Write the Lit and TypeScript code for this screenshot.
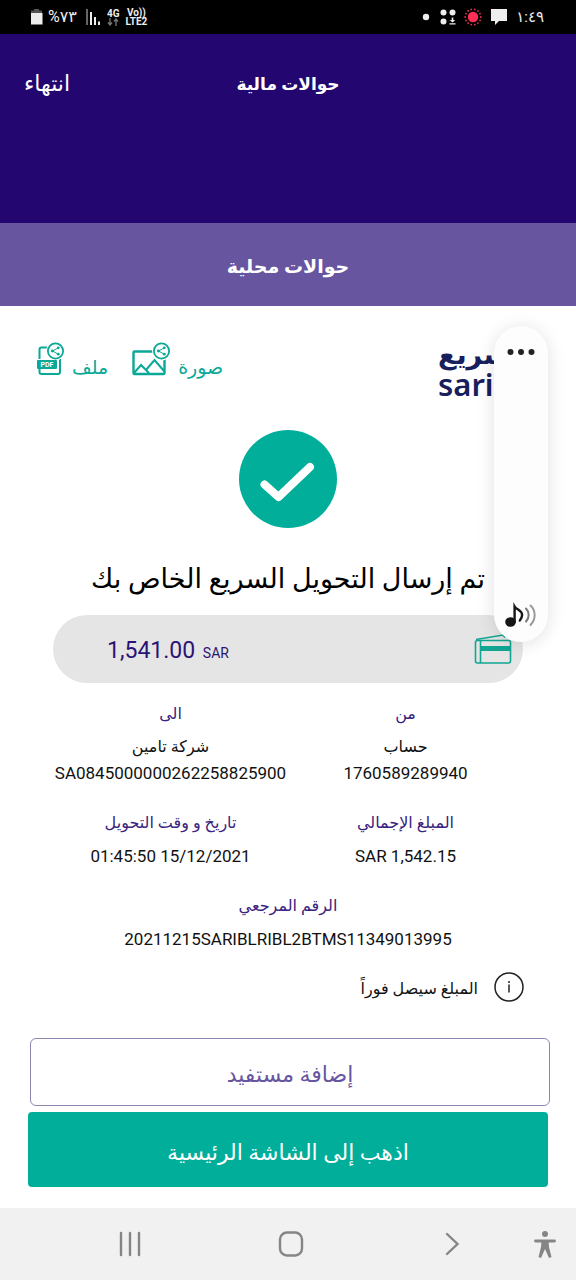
import { LitElement, html, css, svg } from "lit";
import { customElement } from "lit/decorators.js";

const shareBadge = (cx: number, cy: number) => svg`
  <circle cx=${cx} cy=${cy} r="7.6" fill="#fff" stroke="#0aa896" stroke-width="1.8"></circle>
  <path d="M${cx + 2.6} ${cy - 3}L${cx - 3} ${cy}L${cx + 2.6} ${cy + 3}" fill="none" stroke="#0aa896" stroke-width="1"></path>
  <circle cx=${cx + 2.8} cy=${cy - 3.2} r="1.4" fill="#0aa896"></circle>
  <circle cx=${cx - 3.2} cy=${cy} r="1.4" fill="#0aa896"></circle>
  <circle cx=${cx + 2.8} cy=${cy + 3.2} r="1.4" fill="#0aa896"></circle>`;

const rays = Array.from({ length: 14 }, (_, i) => {
  const a = (i * Math.PI * 2) / 14;
  return svg`<circle cx=${9 + Math.cos(a) * 7.8} cy=${9 + Math.sin(a) * 7.8} r="0.9" fill="#e8304e"></circle>`;
});

@customElement("status-bar")
class StatusBar extends LitElement {
  static styles = css`
    :host {
      display: flex;
      align-items: center;
      justify-content: space-between;
      box-sizing: border-box;
      height: 34px;
      padding: 0 32px 0 30px;
      background: #000;
      color: #eee;
      font-family: Roboto, "DejaVu Sans", sans-serif;
    }
    .group {
      display: flex;
      align-items: center;
    }
    .notices {
      gap: 8px;
    }
    .system {
      gap: 5px;
      direction: ltr;
    }
    .text {
      font-size: 16px;
      line-height: 20px;
    }
    .clock {
      font-size: 15px;
    }
    .stack {
      display: flex;
      flex-direction: column;
      align-items: center;
      font-size: 10px;
      line-height: 9px;
      font-weight: 700;
    }
    .network {
      margin: 0 1px 0 2px;
    }
    svg {
      display: block;
    }
  `;

  render() {
    return html`
      <div class="group notices">
        <span class="text clock">١:٤٩</span>
        <svg width="18" height="18" viewBox="0 0 18 18"><path d="M1 1h16v12H9l-4 4v-4H1z" fill="#eee"></path></svg>
        <svg width="18" height="18" viewBox="0 0 18 18"><circle cx="9" cy="9" r="5.2" fill="#ff2e55"></circle>${rays}</svg>
        <svg width="16" height="18" viewBox="0 0 16 18" fill="#eee">
          <circle cx="3.5" cy="4.5" r="3"></circle><circle cx="12.5" cy="4.5" r="3"></circle><circle cx="3.5" cy="13.5" r="3"></circle>
          <path d="M11.7 9.5h1.6v2.5h2l-2.8 2.400-2.800-2.400h2zM9.500 15.200h6v1.400h-6z"></path>
        </svg>
        <svg width="16" height="8" viewBox="0 0 16 8"><circle cx="10" cy="4" r="3.2" fill="#eee"></circle></svg>
      </div>
      <div class="group system">
        <svg width="13" height="18" viewBox="0 0 13 18"><path d="M4 1h5v1.500h3V6H1V2.500h3z" fill="#555"></path><path d="M1 5h11.500v11.500H1z" fill="#eee"></path></svg>
        <span class="text" dir="ltr">%٧٣</span>
        <svg width="18" height="18" viewBox="0 0 18 18"><path d="M5 1v16" stroke="#666" stroke-width="2"></path><path d="M9 4v13M13 9v8M17 13.500v3.500" stroke="#eee" stroke-width="2"></path></svg>
        <div class="stack network">
          <span>4G</span>
          <svg width="12" height="8" viewBox="0 0 12 8" fill="none" stroke="#777" stroke-width="1.3"><path d="M3 0v7M1 4.500l2 2.500 2-2.500M9 8V1M7 3.500L9 1l2 2.500"></path></svg>
        </div>
        <div class="stack"><span>Vo))</span><span>LTE2</span></div>
      </div>
    `;
  }
}

@customElement("nav-bar")
class NavBar extends LitElement {
  static styles = css`
    :host {
      display: flex;
      direction: ltr;
      align-items: center;
      height: 72px;
      background: #f1f1f1;
    }
    .main {
      flex: 1;
      display: flex;
      justify-content: space-between;
      padding: 0 61px 0 114px;
    }
    .access {
      margin-right: 15px;
    }
    button {
      border: 0;
      padding: 0;
      background: none;
    }
    svg {
      display: block;
      fill: none;
      stroke: #858585;
      stroke-width: 2.4;
      stroke-linecap: round;
    }
  `;

  render() {
    return html`
      <div class="main">
        <button aria-label="التطبيقات الأخيرة"><svg width="32" height="32" viewBox="0 0 32 32"><path d="M7 5v22M16 5v22M25 5v22"></path></svg></button>
        <button aria-label="الشاشة الرئيسية"><svg width="32" height="32" viewBox="0 0 32 32"><rect x="5" y="4.500" width="22" height="23" rx="7"></rect></svg></button>
        <button aria-label="رجوع"><svg width="32" height="32" viewBox="0 0 32 32"><path d="M11 6l10.500 10L11 26"></path></svg></button>
      </div>
      <button class="access" aria-label="إمكانية الوصول">
        <svg width="32" height="32" viewBox="0 0 32 32"><circle cx="16" cy="6" r="3" fill="#858585" stroke="none"></circle><path d="M6.500 13h19" stroke-width="2.800"></path><path d="M12.500 13h7l.5 6 2.500 10-2.500 1-4-9-4 9-2.500-1L12 19z" fill="#858585" stroke="none"></path></svg>
      </button>
    `;
  }
}

@customElement("volume-panel")
class VolumePanel extends LitElement {
  static styles = css`
    :host {
      display: flex;
      flex-direction: column;
      align-items: center;
      justify-content: space-between;
      box-sizing: border-box;
      width: 54px;
      height: 316px;
      padding: 22px 0 10px;
      border-radius: 27px;
      background: #fdfdfd;
      box-shadow: 0 2px 18px rgba(0, 0, 0, 0.12);
    }
    button {
      border: 0;
      padding: 0;
      background: none;
    }
    svg {
      display: block;
    }
  `;

  render() {
    return html`
      <button aria-label="خيارات الصوت">
        <svg width="30" height="8" viewBox="0 0 30 8" fill="#222"><circle cx="4.500" cy="4" r="3"></circle><circle cx="15" cy="4" r="3"></circle><circle cx="25.500" cy="4" r="3"></circle></svg>
      </button>
      <button aria-label="صوت الوسائط">
        <svg width="36" height="32" viewBox="0 0 36 32" fill="none" stroke-linecap="round">
          <ellipse cx="7.500" cy="22" rx="5.300" ry="4.800" fill="#161616"></ellipse>
          <path d="M11.600 22V6.500c2 3.500 7.500 3.500 7.500 8.500 0 2.500-1 4-2.300 5.500" stroke="#161616" stroke-width="2.400"></path>
          <path d="M23 8.500c3.500 3.500 3.500 9.500 0 13" stroke="#777" stroke-width="2"></path>
          <path d="M27.500 5.500c5.500 5 5.500 14 0 19.500" stroke="#999" stroke-width="2"></path>
        </svg>
      </button>
    `;
  }
}

@customElement("app-root")
class AppRoot extends LitElement {
  static styles = css`
    :host {
      display: flex;
      flex-direction: column;
      position: relative;
      direction: rtl;
      min-height: 100vh;
      background: #fff;
      color: #111;
      font-family: Roboto, "DejaVu Sans", sans-serif;
      font-size: 16px;
      line-height: 26px;
    }
    button {
      font: inherit;
      cursor: pointer;
    }
    .header {
      display: grid;
      grid-template-columns: 1fr auto 1fr;
      align-items: start;
      box-sizing: border-box;
      height: 189px;
      padding: 36px 24px 0;
      background: #23066f;
      color: #fff;
    }
    .title {
      grid-column: 2;
      margin: 0;
      font-size: 17px;
      line-height: 28px;
    }
    .done {
      justify-self: end;
      border: 0;
      padding: 0;
      background: none;
      color: #fff;
      font-size: 22px;
      line-height: 28px;
    }
    .section {
      box-sizing: border-box;
      height: 83px;
      margin: 0;
      padding-top: 4px;
      background: #6755a0;
      color: #fff;
      text-align: center;
      font-size: 19px;
      line-height: 79px;
    }
    .content {
      flex: 1;
      display: flex;
      flex-direction: column;
      padding: 36px 28px 20px;
    }
    .top {
      display: flex;
      justify-content: space-between;
      align-items: flex-start;
      height: 53px;
      padding: 0 8px;
    }
    .logo {
      width: 102px;
      direction: ltr;
      color: #17205c;
      font-family: "Noto Sans", "DejaVu Sans", sans-serif;
      font-weight: 600;
    }
    .logo span {
      display: block;
      font-size: 31px;
      line-height: 36px;
    }
    .logo .arabic {
      font-size: 27px;
      line-height: 24px;
    }
    .share {
      display: flex;
      gap: 24px;
    }
    .share button {
      display: flex;
      align-items: flex-start;
      gap: 8px;
      border: 0;
      padding: 0;
      background: none;
      color: #0aa896;
      font-size: 19px;
      direction: ltr;
    }
    .share span {
      padding-top: 13px;
    }
    .check {
      align-self: center;
      flex: none;
      margin-top: 35px;
    }
    svg {
      display: block;
    }
    .message {
      margin: 34px 0 19px;
      text-align: center;
      font-size: 27px;
      font-weight: 400;
      line-height: 34px;
      color: #000;
    }
    .amount {
      display: flex;
      align-items: center;
      justify-content: space-between;
      box-sizing: border-box;
      height: 68px;
      margin: 0 25px;
      padding: 6px 10px 0 54px;
      border-radius: 34px;
      background: #e5e5e5;
      color: #2c1474;
    }
    .sum {
      direction: ltr;
      font-size: 23px;
      line-height: 28px;
    }
    .sum small {
      font-size: 14px;
      margin-left: 2px;
    }
    .details {
      display: grid;
      grid-template-columns: 1fr 1fr;
      row-gap: 24px;
      margin: 18px 25px 0;
      text-align: center;
    }
    .wide {
      grid-column: span 2;
    }
    dl,
    dd {
      margin: 0;
    }
    dt {
      margin-bottom: 7px;
      color: #3a2380;
    }
    .number {
      direction: ltr;
      font-size: 17px;
    }
    .note {
      display: flex;
      align-items: center;
      gap: 16px;
      margin: 20px 24px 0;
    }
    .note span {
      padding-top: 3px;
    }
    .actions {
      display: flex;
      flex-direction: column;
      gap: 6px;
      margin-top: 36px;
    }
    .outline,
    .primary {
      padding: 6px 0 0;
      font-size: 22px;
      border-radius: 4px;
    }
    .outline {
      height: 68px;
      margin: 0 -2px 0 2px;
      border: 1px solid #8f83b0;
      border-radius: 6px;
      background: #fff;
      color: #6755a0;
    }
    .primary {
      height: 75px;
      border: 0;
      background: #00ae9a;
      color: #fff;
    }
    .volume {
      position: absolute;
      top: 326px;
      right: 28px;
    }
  `;

  render() {
    return html`
      <status-bar></status-bar>
      <header class="header">
        <h1 class="title">حوالات مالية</h1>
        <button class="done">انتهاء</button>
      </header>
      <h2 class="section">حوالات محلية</h2>
      <main class="content">
        <div class="top">
          <div class="logo"><span class="arabic">سريع</span><span>sarie</span></div>
          <div class="share">
            <button>
              <svg width="38" height="38" viewBox="0 0 38 38">
                <rect x="1.500" y="9.500" width="31" height="22.500" rx="1" fill="none" stroke="#0aa896" stroke-width="2.400"></rect>
                <path d="M2 31l7-8 5 5 8.500-10L32 29M14 28l3 3" fill="none" stroke="#0aa896" stroke-width="2"></path>
                <circle cx="29.500" cy="9" r="9.500" fill="#fff"></circle>
                ${shareBadge(29.5, 9)}
              </svg>
              <span>صورة</span>
            </button>
            <button>
              <svg width="28" height="38" viewBox="0 0 28 38">
                <path d="M3.500 17V7.500q0-2 2-2H22q2 0 2 2V30q0 2-2 2H5.500q-2 0-2-2v-3" fill="none" stroke="#0aa896" stroke-width="2"></path>
                <circle cx="19.500" cy="9" r="9.500" fill="#fff"></circle>
                <rect x="1" y="18" width="20" height="9" rx="1" fill="#0aa896"></rect>
                <text x="11" y="25.200" text-anchor="middle" font-size="7" font-weight="700" fill="#fff" font-family="Roboto, sans-serif">PDF</text>
                ${shareBadge(19.5, 9)}
              </svg>
              <span>ملف</span>
            </button>
          </div>
        </div>
        <svg class="check" width="98" height="98" viewBox="0 0 98 98">
          <circle cx="49" cy="49" r="49" fill="#00ae9a"></circle>
          <path d="M25.500 54.500L39.500 67 71 37" fill="none" stroke="#fff" stroke-width="8" stroke-linecap="round" stroke-linejoin="round"></path>
        </svg>
        <p class="message">تم إرسال التحويل السريع الخاص بك</p>
        <div class="amount">
          <svg width="40" height="40" viewBox="0 0 40 40" fill="none" stroke="#12a592" stroke-width="1.600">
            <path d="M3 7.500L30 3l2 2.500"></path>
            <rect x="2.500" y="8.500" width="35" height="22.500" rx="2"></rect>
            <path d="M7.500 9v22"></path>
            <path d="M8 16.500h29" stroke-width="5"></path>
          </svg>
          <div class="sum">1,541.00 <small>SAR</small></div>
        </div>
        <dl class="details">
          <div><dt>من</dt><dd>حساب</dd><dd class="number">1760589289940</dd></div>
          <div><dt>الى</dt><dd>شركة تامين</dd><dd class="number">SA0845000000262258825900</dd></div>
          <div><dt>المبلغ الإجمالي</dt><dd class="number">SAR 1,542.15</dd></div>
          <div><dt>تاريخ و وقت التحويل</dt><dd class="number">01:45:50 15/12/2021</dd></div>
          <div class="wide"><dt>الرقم المرجعي</dt><dd class="number">20211215SARIBLRIBL2BTMS11349013995</dd></div>
        </dl>
        <div class="note">
          <svg width="30" height="30" viewBox="0 0 30 30"><circle cx="15" cy="15" r="14" fill="none" stroke="#222" stroke-width="1.500"></circle><path d="M15 12.500v8" stroke="#222" stroke-width="1.500"></path><circle cx="15" cy="10" r="1" fill="#222"></circle></svg>
          <span>المبلغ سيصل فوراً</span>
        </div>
        <div class="actions">
          <button class="outline">إضافة مستفيد</button>
          <button class="primary">اذهب إلى الشاشة الرئيسية</button>
        </div>
      </main>
      <nav-bar></nav-bar>
      <volume-panel class="volume"></volume-panel>
    `;
  }
}
